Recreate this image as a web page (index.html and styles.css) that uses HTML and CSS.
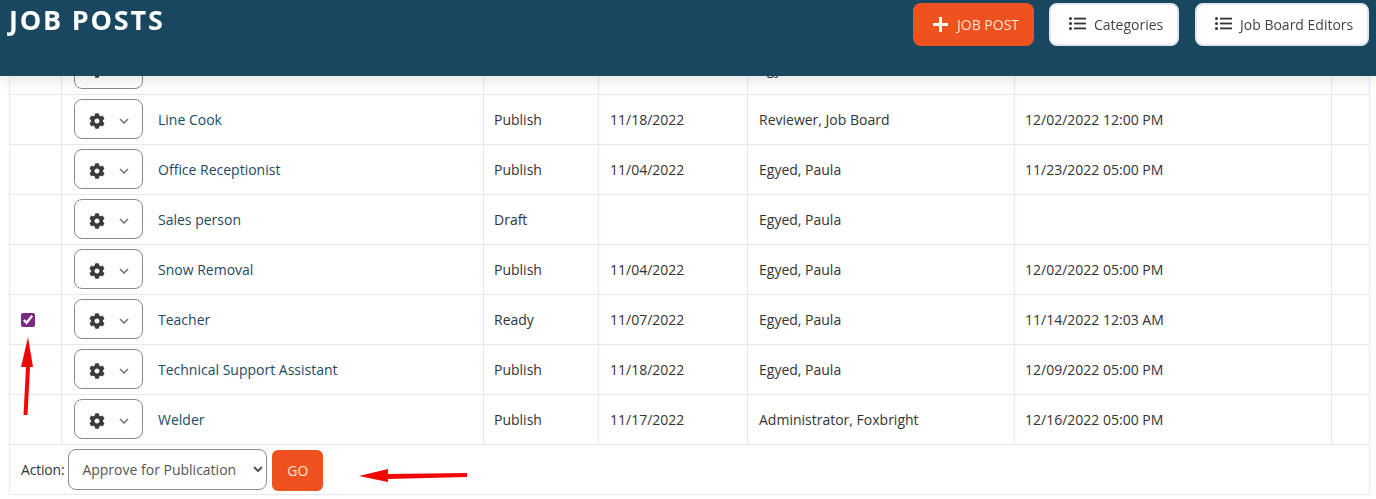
FILE: index.html
```html
<!DOCTYPE html>
<html lang="en">
<head>
<meta charset="utf-8">
<title>Job Posts</title>
<link rel="stylesheet" href="styles.css">
</head>
<body>
<svg class="defs" width="0" height="0" aria-hidden="true">
  <symbol id="cog" viewBox="0 0 512 512"><path d="M487.4 315.7l-42.6-24.6c4.3-23.2 4.3-47 0-70.2l42.6-24.6c4.9-2.8 7.1-8.6 5.5-14-11.1-35.6-30-67.8-54.7-94.6-3.8-4.1-10-5.1-14.8-2.3L380.8 110c-17.9-15.4-38.5-27.3-60.8-35.1V25.8c0-5.6-3.9-10.5-9.4-11.7-36.7-8.2-74.3-7.8-109.2 0-5.5 1.2-9.4 6.1-9.4 11.7V75c-22.2 7.9-42.8 19.8-60.8 35.1L88.7 85.5c-4.9-2.8-11-1.9-14.8 2.3-24.7 26.7-43.6 58.9-54.7 94.6-1.7 5.4.6 11.2 5.5 14L67.3 221c-4.3 23.2-4.3 47 0 70.2l-42.6 24.6c-4.9 2.8-7.1 8.6-5.5 14 11.1 35.6 30 67.8 54.7 94.6 3.8 4.1 10 5.1 14.8 2.3l42.6-24.6c17.9 15.4 38.5 27.3 60.8 35.1v49.2c0 5.6 3.9 10.5 9.4 11.7 36.7 8.2 74.3 7.8 109.2 0 5.5-1.2 9.4-6.1 9.4-11.7v-49.2c22.2-7.9 42.8-19.8 60.8-35.1l42.6 24.6c4.9 2.8 11 1.9 14.8-2.3 24.7-26.7 43.6-58.9 54.7-94.6 1.5-5.5-.7-11.3-5.6-14.1zM256 336c-44.1 0-80-35.9-80-80s35.9-80 80-80 80 35.9 80 80-35.9 80-80 80z"/></symbol>
  <symbol id="chev" viewBox="0 0 10 6"><path d="M1 1l4 4 4-4" fill="none" stroke="currentColor" stroke-width="1.6"/></symbol>
  <symbol id="list" viewBox="0 0 17 13"><circle cx="1.5" cy="1.6" r="1.5"/><circle cx="1.5" cy="6.5" r="1.5"/><circle cx="1.5" cy="11.4" r="1.5"/><rect x="5" y=".7" width="12" height="1.8"/><rect x="5" y="5.6" width="12" height="1.8"/><rect x="5" y="10.5" width="12" height="1.8"/></symbol>
</svg>

<header class="topbar">
  <h1 class="title">JOB POSTS</h1>
  <div class="actions">
    <a class="btn btn-primary" href="#"><svg class="plus" viewBox="0 0 15 15" aria-hidden="true"><path d="M6 0h3v6h6v3H9v6H6V9H0V6h6z"/></svg>JOB POST</a>
    <a class="btn btn-light btn-cat" href="#"><svg class="list-icon" aria-hidden="true"><use href="#list"/></svg>Categories</a>
    <a class="btn btn-light btn-edit" href="#"><svg class="list-icon" aria-hidden="true"><use href="#list"/></svg>Job Board Editors</a>
  </div>
</header>

<main class="content">
  <table class="posts">
    <colgroup>
      <col class="c-check"><col class="c-name"><col class="c-status"><col class="c-date"><col class="c-author"><col class="c-close"><col class="c-end">
    </colgroup>
    <tbody>
      <tr>
        <td></td>
        <td><div class="name-cell"><button class="menu" type="button"><svg class="cog"><use href="#cog"/></svg><svg class="chev"><use href="#chev"/></svg></button></div></td>
        <td></td><td class="wide"></td><td class="wide">Egyed, Paula</td><td></td><td></td>
      </tr>
      <tr>
        <td></td>
        <td><div class="name-cell"><button class="menu" type="button"><svg class="cog"><use href="#cog"/></svg><svg class="chev"><use href="#chev"/></svg></button><a href="#">Line Cook</a></div></td>
        <td>Publish</td><td class="wide">11/18/2022</td><td class="wide">Reviewer, Job Board</td><td>12/02/2022 12:00 PM</td><td></td>
      </tr>
      <tr>
        <td></td>
        <td><div class="name-cell"><button class="menu" type="button"><svg class="cog"><use href="#cog"/></svg><svg class="chev"><use href="#chev"/></svg></button><a href="#">Office Receptionist</a></div></td>
        <td>Publish</td><td class="wide">11/04/2022</td><td class="wide">Egyed, Paula</td><td>11/23/2022 05:00 PM</td><td></td>
      </tr>
      <tr>
        <td></td>
        <td><div class="name-cell"><button class="menu" type="button"><svg class="cog"><use href="#cog"/></svg><svg class="chev"><use href="#chev"/></svg></button><a href="#">Sales person</a></div></td>
        <td>Draft</td><td class="wide"></td><td class="wide">Egyed, Paula</td><td></td><td></td>
      </tr>
      <tr>
        <td></td>
        <td><div class="name-cell"><button class="menu" type="button"><svg class="cog"><use href="#cog"/></svg><svg class="chev"><use href="#chev"/></svg></button><a href="#">Snow Removal</a></div></td>
        <td>Publish</td><td class="wide">11/04/2022</td><td class="wide">Egyed, Paula</td><td>12/02/2022 05:00 PM</td><td></td>
      </tr>
      <tr>
        <td class="check-cell"><input class="check" type="checkbox" checked aria-label="Select Teacher"></td>
        <td><div class="name-cell"><button class="menu" type="button"><svg class="cog"><use href="#cog"/></svg><svg class="chev"><use href="#chev"/></svg></button><a href="#">Teacher</a></div></td>
        <td>Ready</td><td class="wide">11/07/2022</td><td class="wide">Egyed, Paula</td><td>11/14/2022 12:03 AM</td><td></td>
      </tr>
      <tr>
        <td></td>
        <td><div class="name-cell"><button class="menu" type="button"><svg class="cog"><use href="#cog"/></svg><svg class="chev"><use href="#chev"/></svg></button><a href="#">Technical Support Assistant</a></div></td>
        <td>Publish</td><td class="wide">11/18/2022</td><td class="wide">Egyed, Paula</td><td>12/09/2022 05:00 PM</td><td></td>
      </tr>
      <tr>
        <td></td>
        <td><div class="name-cell"><button class="menu" type="button"><svg class="cog"><use href="#cog"/></svg><svg class="chev"><use href="#chev"/></svg></button><a href="#">Welder</a></div></td>
        <td>Publish</td><td class="wide">11/17/2022</td><td class="wide">Administrator, Foxbright</td><td>12/16/2022 05:00 PM</td><td></td>
      </tr>
      <tr>
        <td class="foot" colspan="7">
          <div class="bulk">
            <label class="bulk-label" for="action">Action:</label>
            <select class="bulk-select" id="action"><option>Approve for Publication</option></select>
            <button class="go" type="button">GO</button>
          </div>
        </td>
      </tr>
    </tbody>
  </table>
</main>

<svg class="annot annot-up" viewBox="0 0 20 82" aria-hidden="true"><path d="M10 0L15 30 L12 30 L9.5 78 L5.5 78 L8 30 L3 30Z" fill="#f00806"/></svg>
<svg class="annot annot-left" viewBox="0 0 110 14" aria-hidden="true"><path d="M0 8L29 1 L29 6 L108 5 L108 9 L29 11 L29 14Z" fill="#f00806"/></svg>
</body>
</html>
```

FILE: styles.css
```css
* { box-sizing: border-box; }

html, body { margin: 0; padding: 0; background: #fff; }

body {
  font-family: "Open Sans", "Liberation Sans", sans-serif;
  font-size: 14px;
  color: #333;
  height: 499px;
  overflow: hidden;
}

.defs { position: absolute; }

.topbar {
  position: fixed;
  top: 0;
  left: 0;
  right: 0;
  height: 76px;
  z-index: 5;
  background: #18475f;
  box-shadow: 0 2px 16px rgba(0, 0, 0, .14);
  display: flex;
  justify-content: space-between;
  align-items: flex-start;
  padding: 3px 7px 0 9px;
}

.title {
  margin: 0;
  color: #fff;
  font-size: 27px;
  line-height: 33px;
  font-weight: 700;
  letter-spacing: 1.8px;
}

.actions { display: flex; }

.btn {
  display: flex;
  align-items: center;
  height: 43px;
  border-radius: 8px;
  text-decoration: none;
  font-size: 14px;
}

.btn-primary {
  width: 121px;
  padding-left: 20px;
  background: #ef521f;
  color: #fde6dc;
  margin-right: 15px;
}

.btn-light {
  background: #fff;
  color: #444;
  border: 2px solid #e3e6ea;
  padding-left: 18px;
}

.btn-cat { width: 130px; margin-right: 16px; }
.btn-edit { width: 174px; }

.plus { width: 15px; height: 15px; fill: #fff; margin-right: 9px; }
.list-icon { width: 17px; height: 13px; fill: #333; margin-right: 8px; margin-top: -2px; }

.content { padding: 44px 0 0 9px; }

.posts {
  width: 1360px;
  table-layout: fixed;
  border-collapse: collapse;
}

.c-check { width: 52px; }
.c-name { width: 422px; }
.c-status { width: 115px; }
.c-date { width: 149px; }
.c-author { width: 267px; }
.c-close { width: 317px; }
.c-end { width: 38px; }

.posts td {
  height: 50px;
  padding: 0 10px;
  border: 1px solid #e6e7f0;
  vertical-align: middle;
  white-space: nowrap;
}

.posts tr:first-child td { border-top: 0; }

.posts td.wide { padding-left: 11px; }

.name-cell { display: flex; align-items: center; gap: 15px; padding-left: 2px; }

.name-cell a { color: #1c4a63; text-decoration: none; }

.menu {
  width: 69px;
  height: 40px;
  flex: none;
  padding: 3px 0 0 14px;
  display: flex;
  align-items: center;
  background: #fff;
  border: 1px solid #8a8a8a;
  border-radius: 8px;
}

.cog { width: 16px; height: 16px; fill: #3b3b3b; }
.chev { width: 10px; height: 6px; margin-left: 14px; color: #757575; }

.posts .check-cell { padding-left: 11px; }

.check {
  display: block;
  width: 14px;
  height: 14px;
  margin: 1px 0 0;
  accent-color: #7b2a83;
}

.bulk { display: flex; align-items: center; }

.bulk-label { margin-right: 4px; padding-left: 1px; color: #333; letter-spacing: -.2px; }

.bulk-select {
  width: 199px;
  height: 41px;
  padding: 0 9px;
  font: inherit;
  color: #555;
  background: #fff;
  border: 1px solid #8a8a8a;
  border-radius: 8px;
}

.go {
  width: 51px;
  height: 41px;
  margin: 2px 0 0 5px;
  font: inherit;
  color: #fde6dc;
  background: #ef521f;
  border: 0;
  border-radius: 6px;
}

.annot { position: absolute; z-index: 3; }
.annot-up { left: 18px; top: 337px; width: 20px; height: 82px; }
.annot-left { left: 359px; top: 468px; width: 110px; height: 14px; }
```
